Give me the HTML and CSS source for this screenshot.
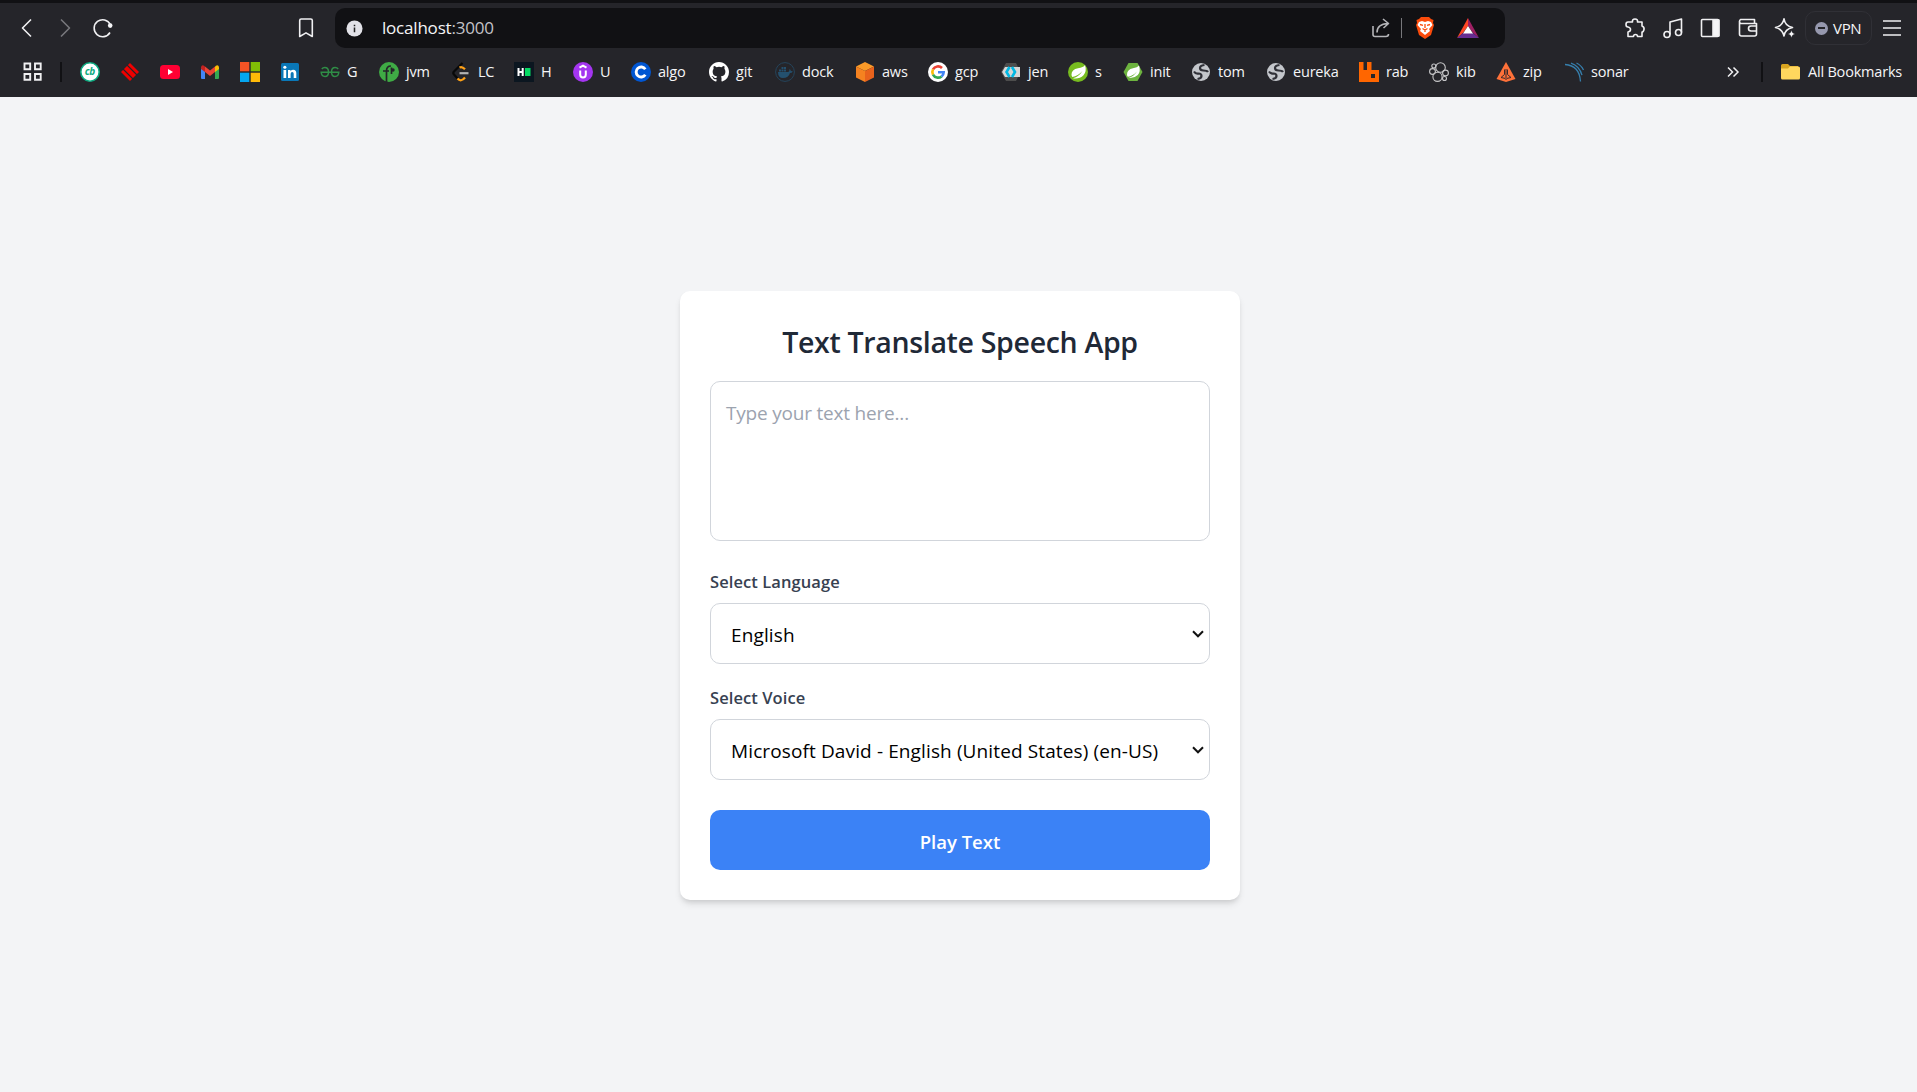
FILE: index.html
```html
<!DOCTYPE html>
<html lang="en">
<head>
<meta charset="utf-8">
<title>Text Translate Speech App</title>
<link rel="stylesheet" href="styles.css">
</head>
<body>
<header class="chrome">
  <div class="toolbar">
    <svg class="ic nav-back" viewBox="0 0 20 20"><path d="M14 1.500 5.500 10l8.500 8.500"/></svg>
    <svg class="ic nav-forward" viewBox="0 0 20 20"><path d="M6 1.500 14.500 10 6 18.500"/></svg>
    <svg class="ic nav-reload" viewBox="0 0 20 20"><path d="M17.300 6.500A8.500 8.500 0 1 0 17 14.500"/><circle cx="17.200" cy="7.600" r="2.300" fill="#f5f5f7" stroke="none"/></svg>
    <svg class="ic nav-mark" viewBox="0 0 20 20"><path d="M5.200 1h9.600q1.500 0 1.500 1.500V18.500l-6.300-3.600-6.300 3.600V2.500Q3.700 1 5.200 1z"/></svg>
    <div class="address">
      <svg class="info" viewBox="0 0 18 18"><circle cx="9" cy="9" r="8.500" fill="#e2e2e8"/><path d="M9 8v5M9 5v1.500" stroke="#222" stroke-width="1.600"/></svg>
      <span class="url">localhost<span class="port">:3000</span></span>
      <svg class="ic share" viewBox="0 0 20 20"><path d="M2 8v8.500q0 2 2 2h11q2.500 0 2.500-2.500M6 14.500Q6 6 17 5.500M12 1l5.500 4.500L12.500 10"/></svg>
      <i class="bar-sep"></i>
      <svg class="lion" viewBox="0 0 20 24"><path fill="#fb4b0b" d="M6 1h8l2 2 2.500 1-.5 3 1 2-3 10-6 4-6-4L1 9l1-2-.5-3L4 3z"/><path fill="#fff" d="m4 6 3-1 3 1 3-1 3 1 1.500 3-3.500 4 1 2-5 4-5-4 1-2-3.500-4z"/><path d="m5 8.500 3 .8M15 8.500l-3 .8M10 8v4M7.500 12.500 10 14l2.500-1.500M10 14v2" stroke="#fb4b0b" stroke-width="1.300" fill="none"/></svg>
      <svg class="bat" viewBox="0 0 22 20"><path fill="#ff4724" d="M11 0v8l-5 7-6 5z"/><path fill="#9e1f63" d="m11 0 11 20-6-5-5-7z"/><path fill="#662d91" d="m0 20 6-5h10l6 5z"/><path fill="#fff" d="m11 8 5 7.500H6z"/></svg>
    </div>
    <div class="tools">
      <svg class="ic" viewBox="0 0 20 20"><path d="M3 4h4.500Q7 1 10 1t2.500 3H17v4q2.500 1 2 3.500T17 14v4.500h-4.500q0-2-2-2t-2 2H3V14q2.500-.5 2.500-2.500T3 9Q1 9 1 6.500T3 4z"/></svg>
      <svg class="ic" viewBox="0 0 20 20"><circle cx="4" cy="16.500" r="3"/><circle cx="15.500" cy="14.500" r="3"/><path d="M7 16.500V4l11.500-3v13.500"/></svg>
      <svg class="ic" viewBox="0 0 20 20"><rect x="1.500" y="1.500" width="17" height="17" rx="1"/><path d="M13 2h6v16h-6z" fill="#f5f5f7"/></svg>
      <svg class="ic" viewBox="0 0 20 20"><path d="M18.500 8V5.500h-16q-1-1-1-2t1-2h14v4M1.500 3v13q0 2 2 2h13q2 0 2-2v-3M18.500 8H13q-2.500 0-2.500 2.500T13 13h5.500z"/></svg>
      <svg class="ic" viewBox="0 0 20 20"><path d="M9 .8q1 7 8.500 8.700-7.500 1.500-8.500 8.500-1.500-7-8.500-8.500Q7.500 7.800 9 .8z"/><path d="M16.500 12q.5 3.300 3.700 4-3.200.6-3.700 4-.6-3.400-3.700-4 3.100-.7 3.700-4z" fill="#f5f5f7" stroke="#25252a" stroke-width=".5"/></svg>
    </div>
    <div class="vpn"><i class="vpn-dot"></i><span>VPN</span></div>
    <svg class="ic menu" viewBox="0 0 20 20"><path d="M1 3h18M1 10h18M1 17h18"/></svg>
  </div>

  <nav class="bookmarks">
    <a class="bm"><svg viewBox="0 0 20 20" fill="none" stroke="#f0f0f2" stroke-width="1.900"><path d="M1.500 1.500h5.700v5.700H1.500zM12 1.500h5.700v5.700H12zM1.500 12h5.700v5.700H1.500zM12 12h5.700v5.700H12z"/></svg></a>
    <i class="sep"></i>
    <a class="bm"><svg viewBox="0 0 20 20"><circle cx="10" cy="10" r="9.200" fill="#fff" stroke="#0cab80" stroke-width="1.600"/><text x="9.700" y="13.400" class="glyph-cb">cb</text></svg></a>
    <a class="bm"><svg viewBox="0 0 20 20"><path fill="#f00000" d="M10 1 19 10 10 19 1 10z"/><path stroke="#25252a" stroke-width="1.100" d="m6.500 2.500 11 11M2.500 6.500l11 11"/></svg></a>
    <a class="bm"><svg viewBox="0 0 20 20"><rect y="3" width="20" height="14" rx="3.500" fill="#ff0033"/><path d="m8 7 5 3-5 3z" fill="#fff"/></svg></a>
    <a class="bm"><svg viewBox="0 0 20 20"><path fill="#4285f4" d="M1 5l4 3v9H2q-1 0-1-1z"/><path fill="#34a853" d="M19 5l-4 3v9h3q1 0 1-1z"/><path fill="#ea4335" d="M5 4.500 10 8.500l5-4V10l-5 4-5-4z"/><path fill="#c5221f" d="M1 6q0-4 3.500-2L5 4.500V10L1 7z"/><path fill="#fbbc04" d="M19 6q0-4-3.500-2L15 4.500V10l4-3z"/></svg></a>
    <a class="bm"><svg viewBox="0 0 20 20"><path fill="#f35325" d="M0 0h9.300v9.300H0z"/><path fill="#81bc06" d="M10.700 0H20v9.300h-9.300z"/><path fill="#05a6f0" d="M0 10.700h9.300V20H0z"/><path fill="#ffba08" d="M10.700 10.700H20V20h-9.300z"/></svg></a>
    <a class="bm"><svg viewBox="0 0 20 20"><rect x="1" y="1" width="18" height="18" rx="1.500" fill="#0a77b7"/><path fill="#fff" d="M3.500 8h2.700v8H3.500zM8 8h2.500v1.200Q11.500 7.800 13.300 7.800q3 0 3 3.500V16h-2.600v-4.200q0-1.800-1.500-1.800-1.600 0-1.600 2v4H8z"/><circle cx="4.850" cy="5.200" r="1.550" fill="#fff"/></svg></a>
    <a class="bm"><svg viewBox="0 0 20 20" fill="none" stroke="#2f8d46" stroke-width="1.500"><path d="M1.800 7q1.200-1.500 3-1.500 3.700 0 3.700 4.500T5 14.500Q1.500 14.500 1.200 10.300H18.800Q18.500 14.500 15 14.500T11.500 10t3.700-4.500q1.800 0 3 1.500"/></svg><span>G</span></a>
    <a class="bm"><svg viewBox="0 0 20 20"><circle cx="10" cy="10" r="10" fill="#3fab45"/><path d="M7.500 20V9Q7.500 4 12 4M4 9h6M12.500 5.500V12" stroke="#25252a" stroke-width="1.700" fill="none"/><circle cx="14" cy="8" r="1.700" fill="#25252a"/></svg><span>jvm</span></a>
    <a class="bm"><svg viewBox="0 0 20 20" fill="none" stroke-width="2.200"><path stroke="#080808" d="M11.500 1 3 9.500q-1.500 1.500 0 3L7 17"/><path stroke="#ffa116" d="M8.500 5.500q2.500-1.500 5.500 1.800M6.500 16.500q3.500 4 7.500-1"/><path stroke="#b3b3b3" d="M8.500 11.200H17.500"/></svg><span>LC</span></a>
    <a class="bm"><svg viewBox="0 0 20 20"><path fill="#0b1620" d="M0 0h20v20H0z"/><path stroke="#fff" stroke-width="2" d="M4.500 6v8M8.700 6v8M4.500 10h4.200"/><path fill="#05db63" d="M11 6h5.500v8H11z"/></svg><span>H</span></a>
    <a class="bm"><svg viewBox="0 0 20 20"><circle cx="10" cy="10" r="10" fill="#a435f0"/><path d="M6.500 5.700 10 3.700l3.500 2M7.200 8.500v4q0 3 2.800 3t2.800-3v-4" fill="none" stroke="#fff" stroke-width="2"/></svg><span>U</span></a>
    <a class="bm"><svg viewBox="0 0 20 20"><circle cx="10" cy="10" r="10" fill="#0056d2"/><path d="M14.300 12.800A5 5 0 1 1 14.300 7.200" fill="none" stroke="#fff" stroke-width="2.900"/></svg><span>algo</span></a>
    <a class="bm"><svg viewBox="0 0 16 16"><path fill="#fff" d="M8 0C3.580 0 0 3.580 0 8c0 3.540 2.290 6.530 5.470 7.590.4.070.55-.17.55-.38 0-.19-.01-.82-.01-1.490-2.010.37-2.530-.49-2.690-.94-.09-.23-.48-.94-.82-1.130-.28-.15-.68-.52-.01-.53.63-.01 1.080.58 1.230.82.72 1.210 1.870.87 2.330.66.07-.52.28-.87.51-1.070-1.780-.2-3.640-.89-3.640-3.950 0-.87.31-1.590.82-2.150-.08-.2-.36-1.020.08-2.120 0 0 .67-.21 2.200.82a7.600 7.600 0 0 1 4 0c1.530-1.040 2.200-.82 2.200-.82.44 1.100.16 1.920.08 2.120.51.56.82 1.270.82 2.150 0 3.070-1.870 3.750-3.650 3.950.29.25.54.73.54 1.480 0 1.070-.01 1.930-.01 2.200 0 .21.15.46.55.38A8.010 8.010 0 0 0 16 8c0-4.420-3.580-8-8-8z"/></svg><span>git</span></a>
    <a class="bm"><svg viewBox="0 0 20 20"><circle cx="10" cy="10" r="9.400" fill="none" stroke="#24445b"/><path fill="#24506e" d="M3 10h10q1.500 0 1.500-3 1.500 1 1.300 2.200 1.200-.3 2 .3-.9 1.500-2.800 1.500Q13.500 16 8 16q-5 0-5-6zM4 7.500h2v2H4zM6.500 7.500h2v2h-2zM9 7.500h2v2H9zM6.500 5h2v2h-2zM9 5h2v2H9z"/></svg><span>dock</span></a>
    <a class="bm"><svg viewBox="0 0 20 20"><path fill="#fa9a28" d="m10 0 9 4.500L10 9 1 4.500z"/><path fill="#f58220" d="M1 4.500 10 9v11l-9-4.500z"/><path fill="#e8621c" d="M19 4.500 10 9v11l9-4.500z"/></svg><span>aws</span></a>
    <a class="bm"><svg viewBox="0 0 20 20"><circle cx="10" cy="10" r="10" fill="#fff"/><g fill="none" stroke-width="2.600"><path stroke="#ea4335" d="M5 7.400a5.700 5.700 0 0 1 9-1.400"/><path stroke="#fbbc05" d="M5 12.600a5.700 5.700 0 0 1 0-5.200"/><path stroke="#34a853" d="M13.600 14.400A5.700 5.700 0 0 1 5 12.600"/><path stroke="#4285f4" d="M10 10.200h5.700a5.700 5.700 0 0 1-2.100 4.200"/></g></svg><span>gcp</span></a>
    <a class="bm"><svg viewBox="0 0 20 20"><path fill="#4d4d4d" d="M5 1h10l2 4v10l-2 4H5l-5-9z"/><path fill="#d6d6d6" d="M4 5h15v10H4L1 10z"/><path fill="none" stroke="#00b8e3" stroke-width="2.600" d="M8.500 5 5.500 10l3 5M11 5l3 5-3 5"/></svg><span>jen</span></a>
    <a class="bm"><svg viewBox="0 0 20 20"><circle cx="10" cy="10" r="10" fill="#77bc1f"/><path fill="#fff" d="M17 3Q15.500 5.500 10 6.300 3.500 7.500 3.500 12.500q0 1.300.8 2.500Q10 14 14.500 9q-3.500 5.500-9.500 7.300 6.500 1 10.500-3Q19 9 17 3z"/></svg><span>s</span></a>
    <a class="bm"><svg viewBox="0 0 20 20"><path fill="#6db33f" d="M5.500 1h9l5 9-5 9h-9l-5-9z"/><path fill="#fff" d="M16 3.500Q14.500 5.500 10 6.300 4 7.500 4 12.500q0 1.300.8 2.300Q10 14 14 9.500q-3.500 5-8.500 6.500 5.500.7 9.300-3Q18 9.500 16 3.500z"/></svg><span>init</span></a>
    <a class="bm"><svg viewBox="0 0 20 20"><circle cx="10" cy="10" r="9" fill="#c3c6cb"/><path fill="none" stroke="#303138" stroke-width="2.200" d="M3 9.500q1.500 2.500 4.500 2 3 0 3 2.500T6.500 17M13.500 3Q9 3.500 9 6t3.500 2.500T17 10"/></svg><span>tom</span></a>
    <a class="bm"><svg viewBox="0 0 20 20"><circle cx="10" cy="10" r="9" fill="#c3c6cb"/><path fill="none" stroke="#303138" stroke-width="2.200" d="M3 9.500q1.500 2.500 4.500 2 3 0 3 2.500T6.500 17M13.500 3Q9 3.500 9 6t3.500 2.500T17 10"/></svg><span>eureka</span></a>
    <a class="bm"><svg viewBox="0 0 20 20"><path fill="#ff6600" fill-rule="evenodd" d="M0 0h4.500v8H8V0h4.500v8H20v12H0zM12 12v4h4v-4z"/></svg><span>rab</span></a>
    <a class="bm"><svg viewBox="0 0 20 20" fill="none" stroke="#c6c6c8" stroke-width="1.100"><circle cx="11.500" cy="5.500" r="4.800"/><circle cx="8.500" cy="14.800" r="4.600"/><circle cx="3.500" cy="9.500" r="2.900"/><circle cx="16.500" cy="11" r="2.900"/><circle cx="4.800" cy="4" r="2"/><circle cx="15.500" cy="16.500" r="2"/></svg><span>kib</span></a>
    <a class="bm"><svg viewBox="0 0 20 20"><path fill="#fe7139" d="m10 0 9.500 17L10 20 .5 17z"/><path d="M10 7v11M8.500 7.500v5L5 15.500l4 .9M11.500 7.500v5l3.500 3-4 .9" stroke="#3b292a" stroke-width="1" fill="none"/></svg><span>zip</span></a>
    <a class="bm"><svg viewBox="0 0 20 20" fill="none" stroke="#367fad" stroke-width="1.300"><path d="M1 2.500Q15.500 3.500 16.500 19.500M7 1.200q8.500 3 11 12M12.500 1q5 2.500 7 7"/></svg><span>sonar</span></a>
    <a class="bm"><svg viewBox="0 0 20 20" fill="none" stroke="#f0f0f2" stroke-width="1.500"><path d="m2 5.500 4.500 4.500L2 14.500M7.500 5.500 12 10l-4.500 4.500"/></svg></a>
    <i class="sep"></i>
    <a class="bm"><svg viewBox="0 0 20 20"><path fill="#d9a520" d="M0 3.500Q0 2 1.500 2H7l2 2h8V9H0z"/><path fill="#ffd75e" d="M0 6.500h7l2-2h8.500Q19 4.500 19 6v10q0 1.500-1.500 1.500h-16Q0 17.500 0 16z"/></svg><span>All Bookmarks</span></a>
  </nav>
</header>

<main class="page">
  <section class="card">
    <h1 class="title">Text Translate Speech App</h1>
    <textarea class="text-input" placeholder="Type your text here..."></textarea>
    <label class="label" for="language">Select Language</label>
    <div class="field">
      <select class="select" id="language"><option>English</option></select>
      <svg class="chevron" viewBox="0 0 12 8"><path d="m1 1.300 5 5 5-5"/></svg>
    </div>
    <label class="label" for="voice">Select Voice</label>
    <div class="field">
      <select class="select" id="voice"><option>Microsoft David - English (United States) (en-US)</option></select>
      <svg class="chevron" viewBox="0 0 12 8"><path d="m1 1.300 5 5 5-5"/></svg>
    </div>
    <button class="play" type="button">Play Text</button>
  </section>
</main>
</body>
</html>
```
FILE: styles.css
```css
* { box-sizing: border-box; }

body {
  margin: 0;
  height: 1092px;
  display: flex;
  flex-direction: column;
  background: #f3f4f6;
  font-family: "Open Sans", "Noto Sans", sans-serif;
  overflow: hidden;
}

svg { display: block; flex: none; overflow: visible; }

.chrome {
  height: 97px;
  flex: none;
  background: #25252a;
  border-top: 3px solid #111114;
  color: #f5f5f7;
}

.toolbar {
  height: 50px;
  display: flex;
  align-items: center;
  padding: 0 15px 0 17px;
}

.ic {
  width: 20px;
  height: 20px;
  fill: none;
  stroke: #f0f0f2;
  stroke-width: 1.6;
  stroke-linejoin: round;
}

.nav-forward { margin-left: 18px; stroke: #77777c; }
.nav-reload { margin-left: 18px; }
.nav-mark { margin-left: 183px; }

.address {
  width: 1170px;
  height: 40px;
  margin-left: 19px;
  padding: 0 26px 0 11px;
  display: flex;
  align-items: center;
  border-radius: 10px;
  background: #111114;
}

.info { width: 17px; height: 17px; }

.url {
  margin-left: 19px;
  margin-right: auto;
  padding-bottom: 2px;
  font-size: 17px;
  letter-spacing: -0.2px;
}

.port { color: #c3c3c8; }
.share { stroke: #b5b5b8; }
.bar-sep { width: 1px; height: 20px; margin: 0 13px 0 10px; background: #77777b; }
.lion { width: 20px; height: 24px; }
.bat { width: 22px; height: 20px; margin-left: 22px; }

.tools { display: flex; gap: 17.500px; margin-left: 120px; }

.vpn {
  width: 67px;
  height: 34px;
  margin-left: 10px;
  display: flex;
  align-items: center;
  gap: 5px;
  padding-left: 9px;
  border: 1px solid #303036;
  border-radius: 10px;
  font-size: 15px;
  letter-spacing: -0.3px;
}

.vpn-dot {
  width: 13px;
  height: 13px;
  border-radius: 50%;
  background: linear-gradient(#25252a, #25252a) center / 7px 2px no-repeat #9698ae;
}

.menu { margin-left: auto; }

.bookmarks {
  display: grid;
  grid-template-columns: 37px 20px 40px 40px 40px 40px 40px 40px 59px 72px 63px 59px 58px 78px 66px 80px 73px 73px 67px 55px 68px 75px 93px 70px 67px 68px 162px 35px 20px 122px;
  padding-left: 23px;
  height: 38px;
  align-items: center;
}

.bm {
  display: flex;
  align-items: center;
  gap: 7px;
  white-space: nowrap;
  font-size: 14.500px;
  letter-spacing: -0.2px;
}

.bm svg { width: 20px; height: 20px; }
.bm span { padding-bottom: 2px; }
.sep { width: 2px; height: 20px; background: #111114; }

.glyph-cb {
  font: italic 700 10px "Open Sans", sans-serif;
  fill: #0cab80;
  text-anchor: middle;
  letter-spacing: -0.5px;
}

.page {
  flex: 1;
  display: flex;
  align-items: center;
  justify-content: center;
  padding: 2px 0 0 3px;
}

.card {
  width: 560px;
  height: 609px;
  padding: 30px;
  display: flex;
  flex-direction: column;
  border-radius: 10px;
  background: #fff;
  box-shadow: 0 5px 7.500px -1px rgba(0, 0, 0, 0.1), 0 2.500px 5px -2px rgba(0, 0, 0, 0.1);
}

.title {
  margin: 0 0 19px;
  padding-top: 1px;
  line-height: 40px;
  font-size: 28.500px;
  font-weight: 600;
  letter-spacing: -0.32px;
  text-align: center;
  color: #1f2937;
  white-space: nowrap;
}

.text-input {
  flex: none;
  width: 500px;
  height: 160px;
  padding: 15px;
  border: 1px solid #d1d5db;
  border-radius: 10px;
  resize: none;
  font: 19px/32px "Open Sans", sans-serif;
  letter-spacing: -0.2px;
}

.text-input::placeholder { color: #9ca3af; }

.label {
  margin: 28px 0 9px;
  font-size: 16.500px;
  line-height: 25px;
  font-weight: 600;
  letter-spacing: 0.08px;
  color: #374151;
}

.field + .label { margin-top: 21px; }

.field { position: relative; }

.select {
  display: block;
  width: 500px;
  height: 61px;
  padding: 3px 30px 0 20px;
  appearance: none;
  border: 1px solid #d1d5db;
  border-radius: 10px;
  background: #fff;
  color: #000;
  font: 19px "Open Sans", sans-serif;
  letter-spacing: 0.12px;
}

.chevron {
  position: absolute;
  right: 6px;
  top: 27px;
  width: 12px;
  height: 8px;
  fill: none;
  stroke: #111;
  stroke-width: 2;
}

.play {
  height: 60px;
  flex: none;
  margin-top: 30px;
  padding: 2px 0 0;
  border: 0;
  border-radius: 10px;
  background: #3b82f6;
  color: #fff;
  font: 600 18.500px "Open Sans", sans-serif;
}
```
